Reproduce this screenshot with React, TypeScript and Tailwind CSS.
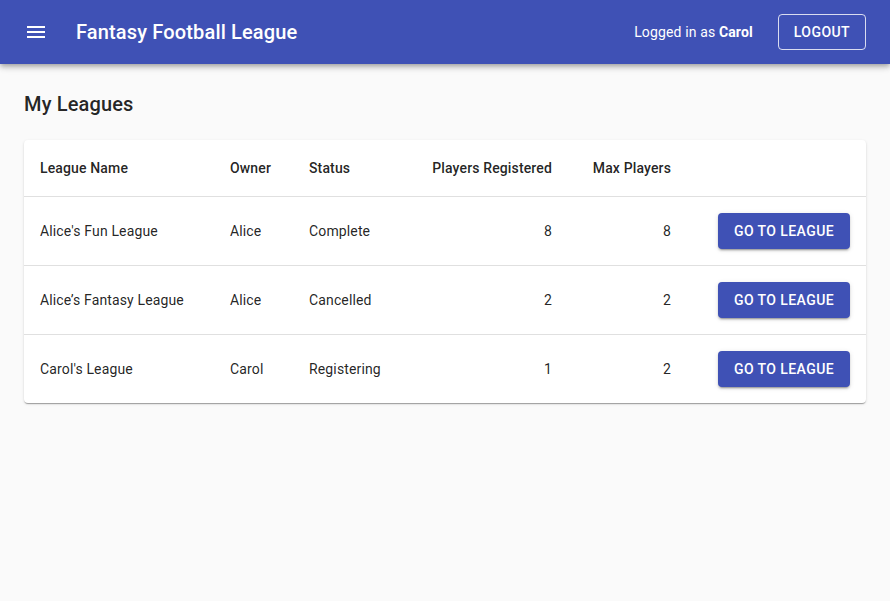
const leagues = [
  { name: "Alice's Fun League", owner: "Alice", status: "Complete", registered: 8, max: 8 },
  { name: "Alice’s Fantasy League", owner: "Alice", status: "Cancelled", registered: 2, max: 2 },
  { name: "Carol's League", owner: "Carol", status: "Registering", registered: 1, max: 2 },
];

function MenuIcon() {
  return (
    <svg viewBox="0 0 24 24" className="h-6 w-6 fill-white">
      <path d="M3 18h18v-2H3v2zm0-5h18v-2H3v2zm0-7v2h18V6H3z" />
    </svg>
  );
}

export default function App() {
  return (
    <div className="min-h-[601px] bg-[#fafafa] font-['Roboto',sans-serif] text-[rgba(0,0,0,0.87)]">
      <header className="relative z-10 flex h-16 items-center bg-[#3f51b5] pl-6 pr-6 text-white shadow-[0_2px_4px_-1px_rgba(0,0,0,0.2),0_4px_5px_0_rgba(0,0,0,0.14),0_1px_10px_0_rgba(0,0,0,0.12)]">
        <MenuIcon />
        <h1 className="ml-7 flex-1 text-[20px] font-medium tracking-[0.0075em]">
          Fantasy Football League
        </h1>
        <span className="text-[14px] tracking-[0.01em]">
          Logged in as <b className="font-bold">Carol</b>
        </span>
        <button className="ml-[25px] h-9 rounded border border-white/80 px-[15px] text-[14px] font-medium uppercase tracking-[0.03em]">
          Logout
        </button>
      </header>

      <main className="px-6 pt-[28px]">
        <h2 className="text-[20px] font-medium leading-[24px] tracking-[0.0075em]">My Leagues</h2>

        <div className="mt-[24px] overflow-hidden rounded bg-white shadow-[0_2px_1px_-1px_rgba(0,0,0,0.2),0_1px_1px_0_rgba(0,0,0,0.14),0_1px_3px_0_rgba(0,0,0,0.12)]">
          <table className="w-full border-collapse text-[14px] tracking-[0.01em]">
            <thead>
              <tr className="h-14 border-b border-[#e0e0e0] font-medium">
                <th className="w-[190px] px-4 pt-[2px] text-left font-medium">League Name</th>
                <th className="w-[79px] px-4 pt-[2px] text-left font-medium">Owner</th>
                <th className="w-[123px] px-4 pt-[2px] text-left font-medium">Status</th>
                <th className="w-[152px] px-4 pt-[2px] text-right font-medium">Players Registered</th>
                <th className="w-[119px] px-4 pt-[2px] text-right font-medium">Max Players</th>
                <th className="px-4"></th>
              </tr>
            </thead>
            <tbody>
              {leagues.map((l, i) => (
                <tr
                  key={l.name}
                  className={i < leagues.length - 1 ? "h-[69px] border-b border-[#e0e0e0]" : "h-[69px]"}
                >
                  <td className="px-4 pt-[2px]">{l.name}</td>
                  <td className="px-4 pt-[2px]">{l.owner}</td>
                  <td className="px-4 pt-[2px]">{l.status}</td>
                  <td className="px-4 pt-[2px] text-right">{l.registered}</td>
                  <td className="px-4 pt-[2px] text-right">{l.max}</td>
                  <td className="px-4 text-right">
                    <button className="h-9 w-[132px] rounded bg-[#3f51b5] pt-[1px] text-[14px] font-medium uppercase tracking-[0.03em] text-white shadow-[0_3px_1px_-2px_rgba(0,0,0,0.2),0_2px_2px_0_rgba(0,0,0,0.14),0_1px_5px_0_rgba(0,0,0,0.12)]">
                      Go to League
                    </button>
                  </td>
                </tr>
              ))}
            </tbody>
          </table>
        </div>
      </main>
    </div>
  );
}
